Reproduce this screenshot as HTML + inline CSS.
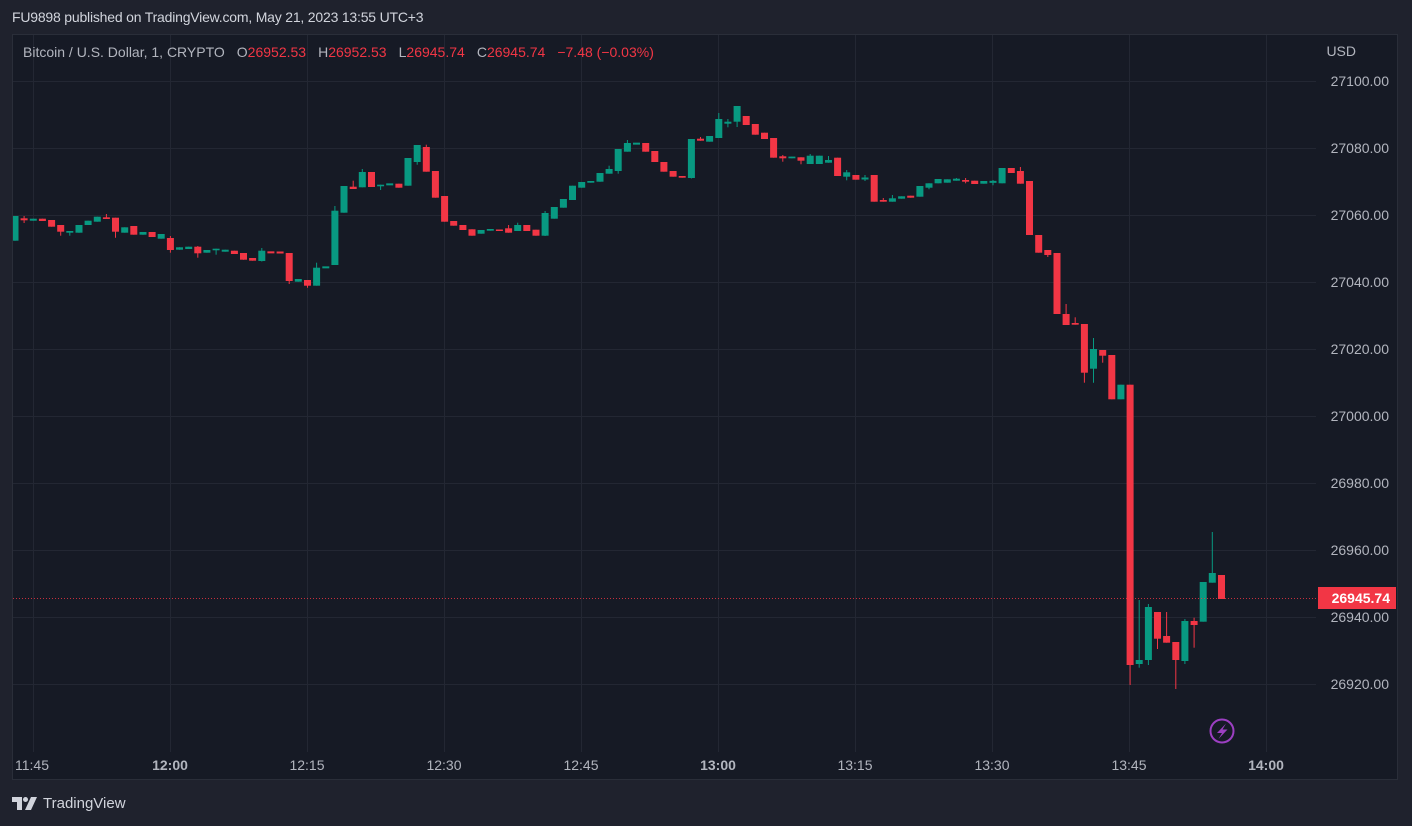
<!DOCTYPE html>
<html><head><meta charset="utf-8">
<style>
html,body{margin:0;padding:0;}
body{width:1412px;height:826px;background:#1f222d;position:relative;overflow:hidden;font-family:"Liberation Sans",sans-serif;}
#hdr{position:absolute;left:12px;top:9px;color:#d1d4dc;font-size:14px;letter-spacing:-0.2px;}
#panel{position:absolute;left:12px;top:34px;width:1386px;height:746px;background:#161a25;border:1px solid #2a2e39;box-sizing:border-box;}
svg{position:absolute;left:0;top:0;}
#logo{position:absolute;left:12px;top:795px;color:#d1d4dc;font-size:15px;display:flex;align-items:center;gap:5px;}
#leg{position:absolute;left:23px;top:44px;font-size:14px;color:#b2b5be;white-space:nowrap;}
#leg span{margin-left:12px;}
#leg b{font-weight:normal;color:#f23645;}
</style></head><body>
<div id="hdr">FU9898 published on TradingView.com, May 21, 2023 13:55 UTC+3</div>
<div id="panel"></div>
<svg id="s" width="1412" height="826" xmlns="http://www.w3.org/2000/svg"></svg>
<div id="leg">Bitcoin / U.S. Dollar, 1, CRYPTO<span>O<b>26952.53</b></span><span>H<b>26952.53</b></span><span>L<b>26945.74</b></span><span>C<b>26945.74</b></span><span><b>−7.48 (−0.03%)</b></span></div>
<div id="logo"><svg width="26" height="14" viewBox="0 0 26 14" style="position:static"><path d="M0 0h10v13H5V5H0z" fill="#d1d4dc"/><circle cx="13.5" cy="2.5" r="2.5" fill="#d1d4dc"/><path d="M19 0h6l-6 13h-6z" fill="#d1d4dc"/></svg><span>TradingView</span></div>
<script>
var s=document.getElementById('s');var h='';
var gridY=[81,148,215,282,349,416,483,550,617,684];
var prices=['27100.00','27080.00','27060.00','27040.00','27020.00','27000.00','26980.00','26960.00','26940.00','26920.00'];
var gridX=[33,170,307,444,581,718,855,992,1129,1266];
var times=['11:45','12:00','12:15','12:30','12:45','13:00','13:15','13:30','13:45','14:00'];
for(var i=0;i<gridY.length;i++){h+='<line x1="13" x2="1316" y1="'+(gridY[i]+.5)+'" y2="'+(gridY[i]+.5)+'" stroke="#232733"/>';}
for(var i=0;i<gridX.length;i++){h+='<line y1="35" y2="752" x1="'+(gridX[i]+.5)+'" x2="'+(gridX[i]+.5)+'" stroke="#232733"/>';}
var D=[[240.7,216],[219.3,219.3,216,223],[220.7,218.7],[218.7,221],[220,226.7],[225,231.7,225,235.7],[232.7,231,231,235.7],[232.7,225],[225,220.7],[221.7,216.7],[217.3,219,214],[217.7,231.7,217.7,237.7],[232.7,227.3],[226,234.7],[234.7,232],[232,237],[238.7,234],[238,250,236,252.7],[249.7,247.3],[249,246.7],[246.7,253.3,246,257.7],[252.7,250],[250.3,248.7,248.7,254.7],[251.7,249.7],[250.7,254],[253,259.7],[258,260.7],[261,250.7,248,261.5],[251.7,253],[252,253],[253,281,253,284],[281.7,279],[280,285.7,280,287.7],[285.7,267.7,262.7,285.7],[268,266.7],[265,210.7,206,265],[212.7,186],[186.7,189,180.7,189],[187.3,172,169,187.3],[172,187],[186.3,184.7,184.7,190],[185,183.7],[183.7,187.7],[185.7,158],[162,145,145,164.7],[147,171.7,144.7,171.7],[171,197.7],[196,221.7],[221,225.7],[225,230],[229.3,235.7],[233.7,230],[230.7,229],[229.5,231],[228.3,232.7,225,232.7],[231,225,222.7,231],[225,231],[229.7,235.7],[235.7,213,211,236],[218.7,207],[207.7,199],[200,185.7],[187.7,182],[182.7,181],[181.7,173],[173.7,169,165.7,173.7],[171,149,149,173.7],[151.7,143,140,151.7],[144.3,143],[143,151.7],[151,162],[162,171.7],[171,176.7],[176,177.7],[178,139,139,178.5],[138.7,140.7,137,140.7],[141.7,136],[138,119,113,138],[123.7,121.7,119,127.3],[121.7,106,106,127],[116,125],[124,134.7],[132.7,139],[138,157.7],[156.3,158.3,155,161.7],[158.3,156.6],[157.3,160.7,157.3,164.3],[164,155.7,154,164],[164,155.7],[162.7,160,156,162.7],[157.7,176],[176.7,172.3,170,180.3],[175,179.7],[179,178,175,181],[175,201.7],[200,201.7,198,201.7],[201.7,198.3,195,201.7],[198.7,196.3],[195.7,197.7],[196.7,186],[187.7,183.3,183.3,189.3],[183.3,179],[182.7,179.3],[180.7,178.7,178,180.7],[180,181.7,178,183.3],[180.7,184],[183.7,181],[182.5,181.2,180,185.3],[183.3,168],[168,173],[171,183.7,167,183.7],[181,235],[235,252.7],[250,255,250,257],[253,314],[314,325,304,325],[323,324.7,317.3,324.7],[324,372.7,324,382.7],[368.7,349,338,382.7],[350,355.7,350,362.7],[355,399.3],[399.3,384.7],[384.7,665,384.7,685],[664,660,600,667.7],[660,607,604,665],[612,638.7,612,649],[636,642.7,612,642.7],[642,660,642,689],[661,621,619,664],[621,625,617.7,647.7],[621.7,582,582,621.7],[582.7,573,532,582.7],[575,599]];
for(var i=0;i<D.length;i++){var d=D[i],o=d[0],c=d[1];var yt=Math.min(o,c),yb=Math.max(o,c);var hi=d.length>2?d[2]:yt,lo=d.length>3?d[3]:yb;var col=c<o?'#089981':'#f23645';var x=15+9.14*i;
if(yb-yt<1.5){var m=(yt+yb)/2;yt=m-1;yb=m+1;}
h+='<line x1="'+x.toFixed(1)+'" x2="'+x.toFixed(1)+'" y1="'+hi+'" y2="'+lo+'" stroke="'+col+'" stroke-width="1"/>';
var l=Math.max(x-3.5,13);h+='<rect x="'+l.toFixed(1)+'" y="'+yt+'" width="'+(x+3.5-l).toFixed(1)+'" height="'+(yb-yt).toFixed(1)+'" fill="'+col+'"/>';}
h+='<line x1="13" x2="1316" y1="598.5" y2="598.5" stroke="#f23645" stroke-dasharray="1 2" opacity="0.8"/>';
for(var i=0;i<prices.length;i++){h+='<text x="1389" y="'+(gridY[i]+5)+'" text-anchor="end" fill="#b2b5be" font-size="14" font-family="Liberation Sans">'+prices[i]+'</text>';}
h+='<text x="1356" y="56" text-anchor="end" fill="#b2b5be" font-size="14" font-family="Liberation Sans">USD</text>';
h+='<rect x="1318" y="587" width="78" height="22" fill="#f23645"/><text x="1390" y="603" text-anchor="end" fill="#fff" font-size="14" font-weight="bold" font-family="Liberation Sans">26945.74</text>';
for(var i=0;i<times.length;i++){var b=(i==1||i==5||i==9);h+='<text x="'+(i==0?15:gridX[i])+'" y="770" text-anchor="'+(i==0?'start':'middle')+'" fill="#b2b5be" font-size="14" '+(b?'font-weight="bold"':'')+' font-family="Liberation Sans">'+times[i]+'</text>';}
h+='<circle cx="1222" cy="731" r="11.5" fill="none" stroke="#9c3fc2" stroke-width="2"/><path d="M1226 723.5 L1217 733 H1222 L1218.5 739 L1227.5 729.5 H1222.5 Z" fill="#9c3fc2"/>';
s.innerHTML=h;
</script>
</body></html>
